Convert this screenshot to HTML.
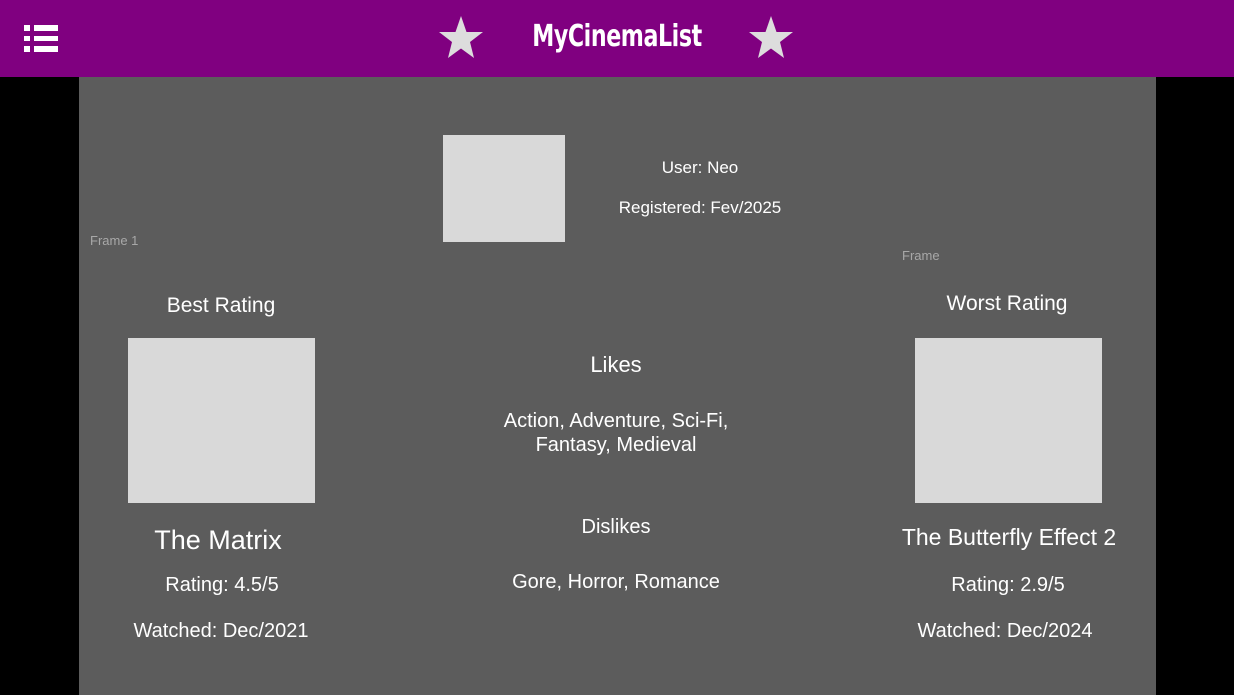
<!DOCTYPE html>
<html><head><style>
body{margin:0;width:1234px;height:695px;background:#000;position:relative;overflow:hidden;font-family:"Liberation Sans",sans-serif;color:#fff}
.hdr{position:absolute;left:0;top:0;width:1234px;height:77px;background:#800080}
.panel{position:absolute;left:79px;top:77px;width:1077px;height:618px;background:#5c5c5c}
.t{position:absolute;white-space:nowrap;text-align:center;transform:translateX(-50%)}
.box{position:absolute;background:#d9d9d9}
.sm{position:absolute;font-size:13px;color:#a8a8a8}
</style></head><body>
<div class="hdr">
<svg style="position:absolute;left:24px;top:25px" width="34" height="27">
<rect x="0" y="0" width="6" height="6" fill="#fff"/><rect x="10" y="0" width="24" height="6" fill="#fff"/>
<rect x="0" y="11" width="6" height="5" fill="#fff"/><rect x="10" y="11" width="24" height="5" fill="#fff"/>
<rect x="0" y="21" width="6" height="6" fill="#fff"/><rect x="10" y="21" width="24" height="6" fill="#fff"/>
</svg>
<svg style="position:absolute;left:438px;top:15px" width="46" height="44" viewBox="0 0 46 44"><polygon points="23,1 28.5,17 45,17 32,27 36,43 23,33.5 10,43 14,27 1,17 17.5,17" fill="#ddd"/></svg>
<svg style="position:absolute;left:748px;top:15px" width="46" height="44" viewBox="0 0 46 44"><polygon points="23,1 28.5,17 45,17 32,27 36,43 23,33.5 10,43 14,27 1,17 17.5,17" fill="#ddd"/></svg>
<div class="t" style="left:617px;top:19px;font-family:'DejaVu Sans Condensed','DejaVu Sans',sans-serif;font-weight:bold;font-size:30px;letter-spacing:-0.5px;transform:translateX(-50%) scaleX(0.82)">MyCinemaList</div>
</div>
<div class="panel"></div>
<div class="box" style="left:443px;top:135px;width:122px;height:107px"></div>
<div class="t" style="left:700px;top:158px;font-size:17px">User: Neo</div>
<div class="t" style="left:700px;top:198px;font-size:17px">Registered: Fev/2025</div>
<div class="sm" style="left:90px;top:233px">Frame 1</div>
<div class="sm" style="left:902px;top:248px">Frame</div>
<div class="t" style="left:221px;top:294px;font-size:21px">Best Rating</div>
<div class="box" style="left:128px;top:338px;width:187px;height:165px"></div>
<div class="t" style="left:218px;top:525px;font-size:27px">The Matrix</div>
<div class="t" style="left:222px;top:574px;font-size:20px">Rating: 4.5/5</div>
<div class="t" style="left:221px;top:620px;font-size:20px">Watched: Dec/2021</div>
<div class="t" style="left:616px;top:352px;font-size:22px">Likes</div>
<div class="t" style="left:616px;top:409px;font-size:20px;line-height:24px">Action, Adventure, Sci-Fi,<br>Fantasy, Medieval</div>
<div class="t" style="left:616px;top:516px;font-size:20px">Dislikes</div>
<div class="t" style="left:616px;top:571px;font-size:20px">Gore, Horror, Romance</div>
<div class="t" style="left:1007px;top:292px;font-size:21px">Worst Rating</div>
<div class="box" style="left:915px;top:338px;width:187px;height:165px"></div>
<div class="t" style="left:1009px;top:524px;font-size:23px">The Butterfly Effect 2</div>
<div class="t" style="left:1008px;top:574px;font-size:20px">Rating: 2.9/5</div>
<div class="t" style="left:1005px;top:620px;font-size:20px">Watched: Dec/2024</div>
</body></html>
